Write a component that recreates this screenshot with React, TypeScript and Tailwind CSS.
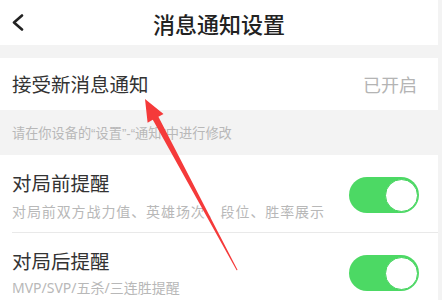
import React from 'react'

const font = { fontFamily: '"Noto Sans CJK SC", "Noto Sans", sans-serif' }
const latinFirst = { fontFamily: '"Liberation Sans", "Noto Sans CJK SC", sans-serif' }
const notoFirst = { fontFamily: '"Noto Sans", "Noto Sans CJK SC", sans-serif' }

function Toggle() {
  return (
    <div className="flex h-[36px] w-[70px] items-center justify-end rounded-full bg-[#4cd964] p-[1.5px]">
      <div className="h-[33px] w-[33px] rounded-full border border-[#46d35f] bg-white" />
    </div>
  )
}

export default function App() {
  return (
    <div className="relative h-[300px] w-[442px] overflow-hidden bg-[#f3f3f3]" style={font}>
      <div className="w-[438px]">
        {/* header */}
        <div className="relative flex h-[45px] items-center justify-center bg-white">
          <svg className="absolute left-[11px] top-[14px]" width="14" height="17" viewBox="0 0 14 17">
            <polyline points="11,1.5 3,8.5 11,15.5" fill="none" stroke="#222" strokeWidth="2.6" strokeLinecap="round" strokeLinejoin="round" />
          </svg>
          <span className="text-[22px] font-medium leading-none text-[#222]">消息通知设置</span>
        </div>

        <div className="h-[13px]" />

        {/* main switch row */}
        <div className="flex h-[52px] items-center justify-between bg-white pl-[12px] pr-[21px]">
          <span className="text-[19.5px] leading-none text-[#333]">接受新消息通知</span>
          <span className="text-[18px] leading-none text-[#b4b4b4]">已开启</span>
        </div>

        <div className="h-[45px] pl-[12px] pt-[14px] text-[13.2px] leading-[20px] text-[#b8b8b8]" style={latinFirst}>
          请在你设备的“设置”-“通知”中进行修改
        </div>

        {/* reminders */}
        <div className="bg-white">
          <div className="flex h-[77px] items-center justify-between pl-[12px] pr-[19px]">
            <div className="flex flex-col pt-[2px]">
              <span className="text-[19.5px] leading-[28px] text-[#333]">对局前提醒</span>
              <span className="mt-[4px] text-[14px] leading-[20px] tracking-[0.9px] text-[#b8b8b8]">
                对局前双方战力值、英雄场次、段位、胜率展示
              </span>
            </div>
            <div className="mt-[3px]">
              <Toggle />
            </div>
          </div>
          <div className="ml-[12px] h-px bg-[#e9e9e9]" />
          <div className="flex h-[77px] items-center justify-between pl-[12px] pr-[19px]">
            <div className="flex flex-col pt-[2px]">
              <span className="text-[19.5px] leading-[28px] text-[#333]">对局后提醒</span>
              <span className="mt-[3px] text-[14px] leading-[20px] text-[#b8b8b8]" style={notoFirst}>
                MVP/SVP/五杀/三连胜提醒
              </span>
            </div>
            <div className="mt-[3px]">
              <Toggle />
            </div>
          </div>
        </div>
      </div>

      {/* red annotation arrow */}
      <svg className="pointer-events-none absolute left-0 top-0" width="442" height="300" viewBox="0 0 442 300">
        <polygon
          points="145,99 163.5,114 158.4,116.8 237.6,270 236.6,270.3 152.8,119.8 147.6,122.8"
          fill="#f53a3a"
        />
      </svg>
    </div>
  )
}
